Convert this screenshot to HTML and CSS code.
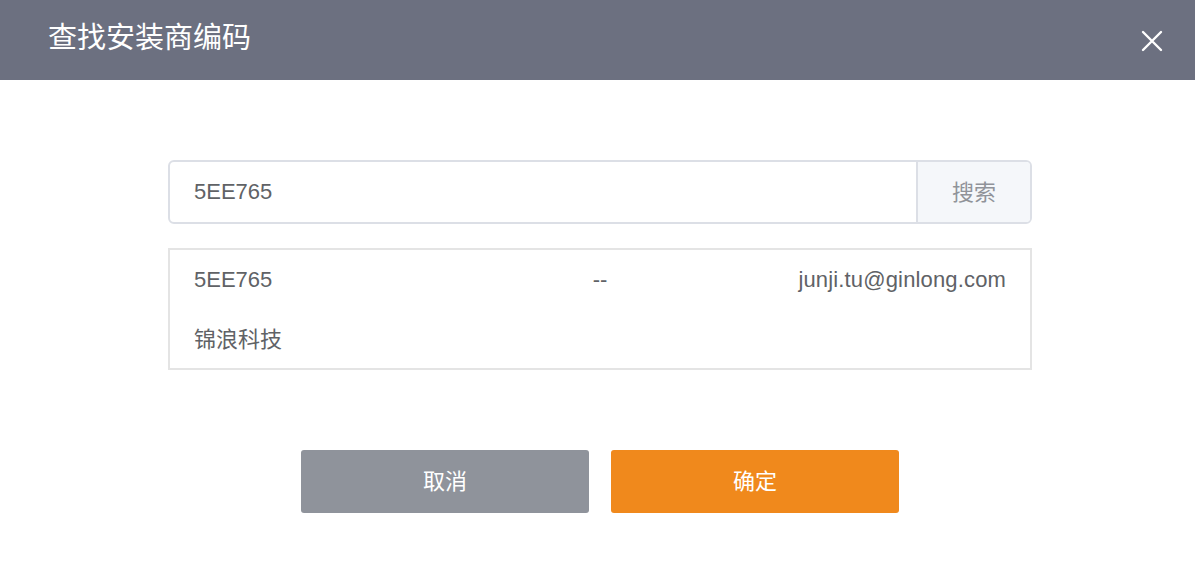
FILE: index.html
```html
<!DOCTYPE html>
<html lang="zh">
<head>
<meta charset="utf-8">
<link rel="stylesheet" href="styles.css">
</head>
<body>
<div class="dialog">
  <header class="dialog-header">
    <h1 class="dialog-title">查找安装商编码</h1>
    <button class="close-btn" aria-label="关闭">
      <svg width="22" height="22" viewBox="0 0 22 22"><path d="M2 2 L20 20 M20 2 L2 20" stroke="#fff" stroke-width="2.4" stroke-linecap="round"/></svg>
    </button>
  </header>
  <main class="dialog-body">
    <div class="search-group">
      <div class="search-input">5EE765</div>
      <div class="search-addon">搜索</div>
    </div>
    <div class="result-box">
      <div class="result-row">
        <span class="col-left">5EE765</span>
        <span class="col-mid">--</span>
        <span class="col-right">junji.tu@ginlong.com</span>
      </div>
      <div class="result-row cjk-row">
        <span class="col-left">锦浪科技</span>
      </div>
    </div>
    <div class="actions">
      <button class="btn btn-cancel">取消</button>
      <button class="btn btn-ok">确定</button>
    </div>
  </main>
</div>
</body>
</html>
```
FILE: styles.css
```css
* { box-sizing: border-box; }
html, body {
  margin: 0;
  padding: 0;
  background: #fff;
  font-family: "Liberation Sans", "Noto Sans CJK SC", sans-serif;
  overflow: hidden;
}
.dialog {
  width: 1195px;
  height: 568px;
}
.dialog-header {
  height: 80px;
  background: #6c7080;
  display: flex;
  align-items: center;
  justify-content: space-between;
  padding: 0 32px 0 48px;
}
.dialog-title {
  margin: 0;
  color: #fff;
  font-size: 29px;
  font-weight: normal;
  line-height: 1;
  position: relative;
  top: -2px;
}
.close-btn {
  background: none;
  border: none;
  padding: 0;
  width: 22px;
  height: 22px;
  margin-top: 2px;
  cursor: pointer;
  display: flex;
}
.dialog-body {
  padding: 80px 0 0 168px;
}
.search-group {
  width: 864px;
  height: 64px;
  display: flex;
  border: 2px solid #dcdfe6;
  border-radius: 6px;
  overflow: hidden;
}
.search-input {
  flex: 1;
  display: flex;
  align-items: center;
  padding-left: 24px;
  font-size: 22px;
  color: #606266;
}
.search-addon {
  width: 114px;
  background: #f5f7fa;
  border-left: 2px solid #dcdfe6;
  display: flex;
  align-items: center;
  justify-content: center;
  padding-bottom: 5px;
  font-size: 22px;
  color: #909399;
}
.result-box {
  margin-top: 24px;
  width: 864px;
  height: 122px;
  border: 2px solid #e4e4e4;
  padding: 0 24px;
}
.result-row {
  height: 59px;
  display: grid;
  grid-template-columns: 1fr auto 1fr;
  align-items: center;
  font-size: 22px;
  color: #606266;
}
.result-row.cjk-row {
  padding-bottom: 4px;
  height: 59px;
}
.col-left { text-align: left; }
.col-mid { text-align: center; }
.col-right { text-align: right; letter-spacing: 0.15px; }
.actions {
  margin-top: 80px;
  width: 864px;
  display: flex;
  justify-content: center;
  gap: 22px;
}
.btn {
  width: 288px;
  height: 63px;
  border: none;
  border-radius: 3px;
  color: #fff;
  font-family: inherit;
  font-size: 22px;
  cursor: pointer;
  padding: 0 0 6px 0;
}
.btn-cancel { background: #8f939b; }
.btn-ok { background: #f0891c; }
```
